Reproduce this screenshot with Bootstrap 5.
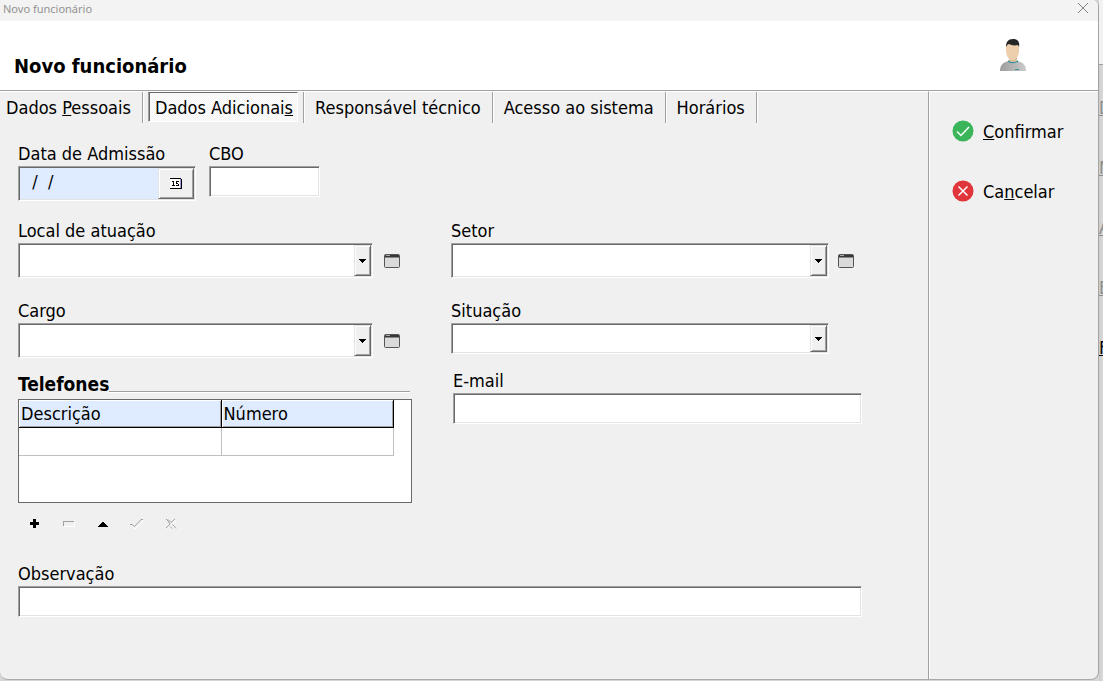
<!DOCTYPE html>
<html lang="pt-BR">
<head>
<meta charset="utf-8">
<meta name="viewport" content="width=device-width, initial-scale=1">
<title>Novo funcionário</title>
<link rel="stylesheet" href="https://cdn.jsdelivr.net/npm/bootstrap@5.3.0/dist/css/bootstrap.min.css">
<style>
  :root { --face: #f0f0f0; --edge: #a0a0a0; --dark: #696969; --lite: #e3e3e3; --tint: #dfebff; }
  body { font-family: "DejaVu Sans Condensed", "Noto Sans", sans-serif; font-size: 18px; line-height: 24px; color: #000; background: #d6d6d6; }
  button, input, select { font: inherit; color: inherit; }
  .dialog-window { background: var(--face); border-right: 1px solid #a4a4a4; border-bottom: 1px solid #a9a9a9; border-radius: 0 6px 8px 8px; overflow: hidden; margin-bottom: 1px; }
  .title-strip { height: 21px; background: #f3f3f3; color: #929292; font-family: "Noto Sans", sans-serif; font-size: 11px; line-height: 18px; padding-left: 3px; padding-right: 9px; }
  .page-head { height: 70px; border-bottom: 1px solid var(--edge); padding: 0 71px 12px 14px; }
  .page-head h1 { font-size: 20px; line-height: 24px; }
  .avatar { margin-bottom: 6px; }
  .plain { background: none; border: 0; padding: 0; color: inherit; }
  .close-btn { padding-top: 3px; }
  .main-pane { border-right: 1px solid var(--edge); }
  .main-pane, .side-pane { border-top: 1px solid #fff; }
  .side-pane { width: 169px; border-left: 1px solid #fff; padding: 28px 0 0 22px; gap: 36px; }
  .side-pane button { gap: 9px; }
  .side-pane svg { flex: none; margin-bottom: 2px; }
  .tab-strip { height: 31px; }
  .tab-strip button { border-right: 1px solid var(--edge); box-shadow: 1px 0 #fff; padding: 0 11px 0 11px; white-space: nowrap; }
  .tab-strip li:first-child button { padding-left: 6px; }
  .tab-strip .picked { border-right: 1px solid var(--edge); box-shadow: 1px 0 #fff; padding: 0 5px; }
  .tab-strip .picked button { padding: 1px 4px 0 6px; margin-bottom: 1px; border: 1px solid; border-color: var(--dark) #fff #fff var(--edge); box-shadow: inset 1px 0 var(--dark); background: repeating-conic-gradient(#fff 0 25%, #f2f2f2 0 50%) 0 0 / 2px 2px; }
  .form-area { padding: 18px 66px 40px 18px; }
  .form-area .row { --bs-gutter-x: 22px; }
  .form-area label { display: block; height: 25px; padding-top: 1px; }
  .first-line { gap: 13px; margin-bottom: 17px; }
  .line-a { margin-bottom: 20px; }
  .line-b { margin-bottom: 14px; }
  .sunk { border: 1px solid; border-color: var(--edge) #fff #fff var(--edge); box-shadow: inset 1px 1px var(--dark), inset -1px -1px var(--lite); background: #fff; border-radius: 0; height: 31px; padding: 2px 4px; width: 100%; }
  .tall { height: 35px; }
  .raised { background: var(--face); border: 1px solid; border-color: var(--lite) var(--dark) var(--dark) var(--lite); box-shadow: inset 1px 1px #fff, inset -1px -1px var(--edge); }
  .combo select { appearance: none; }
  .combo .drop { position: absolute; top: 2px; right: 2px; bottom: 2px; width: 17px; pointer-events: none; }
  .date-box { width: 178px; padding: 1px; }
  .date-box input { background: var(--tint); border: 0; min-width: 0; padding: 0 2px 4px 2px; outline: 0; }
  .date-box button { width: 36px; flex: none; }
  .cbo-box { width: 111px; }
  .left-combo { padding-right: 29px; gap: 11px; }
  .right-combo { padding-right: 8px; gap: 9px; }
  .status-combo { margin-right: 33px; }
  .legend-title { font-size: 19px; margin-bottom: 3px; }
  .legend-line { height: 1px; background: var(--edge); box-shadow: 0 1px #fff; margin: 0 2px 4px 0; }
  .phones { margin-right: 17px; }
  .grid-frame { border: 1px solid var(--dark); background: #fff; height: 104px; padding-right: 17px; }
  .grid-frame table { width: 100%; border-collapse: separate; border-spacing: 0; table-layout: fixed; }
  .grid-frame th { height: 28px; font-weight: 400; padding: 0 2px; background: var(--tint); border-right: 1px solid #000; border-bottom: 1px solid #000; box-shadow: inset 1px 1px #fff, inset -1px -1px var(--edge); }
  .grid-frame th:first-child { width: 54%; }
  .grid-frame td { height: 28px; border-right: 1px solid #c0c0c0; border-bottom: 1px solid #c0c0c0; }
  .record-bar { margin: 5px 0 23px; }
  .record-bar button { width: 34px; height: 30px; }
  .email-group { padding-left: 2px; }
  .behind { width: 4px; background: linear-gradient(90deg, #cdcdcd, #dadada); }
  .behind-head { height: 65px; background: #f2f2f2; border-bottom: 1px solid var(--edge); margin-bottom: 31px; }
  .behind span { display: block; height: 24px; margin-bottom: 36px; color: #8d8d8d; text-decoration: underline; }
</style>
</head>
<body>
<div class="d-flex min-vh-100">
  <main class="dialog-window d-flex flex-column flex-grow-1">
    <div class="title-strip d-flex justify-content-between align-items-start">
      <span>Novo funcionário</span>
      <button class="plain close-btn d-flex" type="button" aria-label="Fechar">
        <svg width="12" height="11" viewBox="0 0 12 11" fill="none" stroke="#858585"><path d="M1 0l10 10M11 0L1 10"/></svg>
      </button>
    </div>
    <header class="page-head bg-white d-flex justify-content-between align-items-end">
      <h1 class="fw-bold m-0">Novo funcionário</h1>
      <svg class="avatar" width="28" height="34" viewBox="0 0 28 34" aria-hidden="true">
        <defs><linearGradient id="shirt"><stop stop-color="#9d9d9d"/><stop offset="1" stop-color="#cbcbcb"/></linearGradient></defs>
        <path d="M1 33c0-6 3-9 9-10h8c6 1 9 4 9 10z" fill="url(#shirt)"/>
        <path d="M9 23q5 3 10 0" fill="none" stroke="#3a95a0" stroke-width="1.500"/>
        <path d="M10 18h8v5q-4 2-8 0z" fill="#dfbf9b"/>
        <path d="M7 9C7 3 20 3 20 9v4c0 5-3 9-6.500 9S7 18 7 13z" fill="#edcfad"/>
        <path d="M7 9C7 4 9 1 14 1c5 0 7 3 6 8l-1-2c-4 1-7 0-9-1-1 0-2 1-3 3z" fill="#262626"/>
        <path d="M16 31.500h4" stroke="#3a95a0"/>
      </svg>
    </header>
    <div class="d-flex flex-grow-1">
      <section class="main-pane flex-grow-1">
        <ul class="tab-strip d-flex list-unstyled m-0" role="tablist">
          <li class="d-flex"><button class="plain" role="tab" type="button">Dados <u>P</u>essoais</button></li>
          <li class="picked d-flex"><button role="tab" type="button" aria-selected="true">Dados Adicionai<u>s</u></button></li>
          <li class="d-flex"><button class="plain" role="tab" type="button">Responsável técnico</button></li>
          <li class="d-flex"><button class="plain" role="tab" type="button">Acesso ao sistema</button></li>
          <li class="d-flex"><button class="plain" role="tab" type="button">Horários</button></li>
        </ul>
        <form class="form-area" onsubmit="return false">
          <div class="first-line d-flex">
            <div>
              <label for="adm">Data de Admissão</label>
              <div class="sunk tall date-box d-flex">
                <input id="adm" class="flex-grow-1" type="text" value="  /  /">
                <button class="raised d-flex align-items-center justify-content-center p-0" type="button" aria-label="Calendário">
                  <svg width="14" height="14" viewBox="0 0 14 14" fill="none" shape-rendering="crispEdges"><path d="M1 1h11v11H1z" fill="#fff"/><path d="M1 1.500h11M1 11.500h12M12.500 2v10" stroke="#000"/><path d="M11.500 2v9" stroke="#9a9ae0"/><path d="M3 4.500h1M4.500 4v5M3 8.500h3M10 4.500H7.500v2H9M9.500 6.500v2M7 8.500h2" stroke="#000"/></svg>
                </button>
              </div>
            </div>
            <div>
              <label for="cbo">CBO</label>
              <input id="cbo" class="sunk cbo-box" type="text">
            </div>
          </div>
          <div class="row">
            <div class="col-6">
              <div class="line-a">
                <label for="local">Local de atuação</label>
                <div class="left-combo d-flex align-items-center">
                  <div class="combo position-relative flex-grow-1 d-flex">
                    <select id="local" class="sunk tall"><option></option></select>
                    <span class="drop raised d-flex align-items-center justify-content-center"><svg width="7" height="4" shape-rendering="crispEdges"><path d="M0 0h7v1H6v1H5v1H4v1H3V3H2V2H1V1H0z"/></svg></span>
                  </div>
                  <button class="plain d-flex" type="button" aria-label="Abrir locais"><svg width="16" height="14" viewBox="0 0 16 14"><rect x=".5" y=".5" width="15" height="13" rx="1" fill="#dadada" stroke="#555"/><path d="M1 1h14v2.500H1z" fill="#383838"/><path d="M2 1.500h4" stroke="#aaa"/></svg></button>
                </div>
              </div>
              <div class="line-b">
                <label for="cargo">Cargo</label>
                <div class="left-combo d-flex align-items-center">
                  <div class="combo position-relative flex-grow-1 d-flex">
                    <select id="cargo" class="sunk tall"><option></option></select>
                    <span class="drop raised d-flex align-items-center justify-content-center"><svg width="7" height="4" shape-rendering="crispEdges"><path d="M0 0h7v1H6v1H5v1H4v1H3V3H2V2H1V1H0z"/></svg></span>
                  </div>
                  <button class="plain d-flex" type="button" aria-label="Abrir cargos"><svg width="16" height="14" viewBox="0 0 16 14"><rect x=".5" y=".5" width="15" height="13" rx="1" fill="#dadada" stroke="#555"/><path d="M1 1h14v2.500H1z" fill="#383838"/><path d="M2 1.500h4" stroke="#aaa"/></svg></button>
                </div>
              </div>
              <div class="phones">
                <div class="legend-title d-flex align-items-end"><strong id="tel">Telefones</strong><span class="legend-line flex-grow-1"></span></div>
                <div class="grid-frame">
                  <table aria-labelledby="tel">
                    <thead><tr><th scope="col">Descrição</th><th scope="col">Número</th></tr></thead>
                    <tbody><tr><td></td><td></td></tr></tbody>
                  </table>
                </div>
              </div>
              <div class="record-bar d-flex">
                <button class="plain" type="button" aria-label="Inserir"><svg width="14" height="12" shape-rendering="crispEdges"><path d="M5 1h3v3h3v3H8v3H5V7H2V4h3z"/></svg></button>
                <button class="plain" type="button" disabled aria-label="Excluir"><svg width="14" height="12" fill="none" shape-rendering="crispEdges"><path d="M1.500 8V3.500H12" stroke="#a0a0a0"/><path d="M2 8.500h10.500V4" stroke="#fff"/></svg></button>
                <button class="plain" type="button" aria-label="Editar"><svg width="14" height="12" shape-rendering="crispEdges"><path d="M2 9h10V8h-1V7h-1V6H9V5H8V4H6v1H5v1H4v1H3v1H2z"/></svg></button>
                <button class="plain" type="button" disabled aria-label="Gravar"><svg width="14" height="12" fill="none"><path d="M1 7l4 4 8.500-8.500" stroke="#fff"/><path d="M0 6.500h2l2.500 2L11 1.500h2" stroke="#a0a0a0"/></svg></button>
                <button class="plain" type="button" disabled aria-label="Desfazer"><svg width="14" height="12" fill="none"><path d="M3 11.500l3-3M8.500 6L12 2M9 8.500l3 3" stroke="#fff"/><path d="M2 1.500h1l3 4.500-4 4M4 1.500l3 3 4-3.500M8.500 6.500l3.500 4M6 8.500l2 2" stroke="#a0a0a0"/></svg></button>
              </div>
            </div>
            <div class="col-6">
              <div class="line-a">
                <label for="setor">Setor</label>
                <div class="right-combo d-flex align-items-center">
                  <div class="combo position-relative flex-grow-1 d-flex">
                    <select id="setor" class="sunk tall"><option></option></select>
                    <span class="drop raised d-flex align-items-center justify-content-center"><svg width="7" height="4" shape-rendering="crispEdges"><path d="M0 0h7v1H6v1H5v1H4v1H3V3H2V2H1V1H0z"/></svg></span>
                  </div>
                  <button class="plain d-flex" type="button" aria-label="Abrir setores"><svg width="16" height="14" viewBox="0 0 16 14"><rect x=".5" y=".5" width="15" height="13" rx="1" fill="#dadada" stroke="#555"/><path d="M1 1h14v2.500H1z" fill="#383838"/><path d="M2 1.500h4" stroke="#aaa"/></svg></button>
                </div>
              </div>
              <div class="line-b">
                <label for="situacao">Situação</label>
                <div class="status-combo combo position-relative d-flex">
                  <select id="situacao" class="sunk"><option></option></select>
                  <span class="drop raised d-flex align-items-center justify-content-center"><svg width="7" height="4" shape-rendering="crispEdges"><path d="M0 0h7v1H6v1H5v1H4v1H3V3H2V2H1V1H0z"/></svg></span>
                </div>
              </div>
              <div class="email-group">
                <label for="email">E-mail</label>
                <input id="email" class="sunk" type="email">
              </div>
            </div>
          </div>
          <label for="obs">Observação</label>
          <input id="obs" class="sunk" type="text">
        </form>
      </section>
      <aside class="side-pane d-flex flex-column flex-shrink-0">
        <button class="plain d-flex align-items-center" type="button"><svg width="22" height="22" viewBox="0 0 22 22" fill="none"><circle cx="11" cy="11" r="10.500" fill="#3bb55a"/><path d="M5 11.500l4 4 8-8.500" stroke="#fff" stroke-width="1.500"/></svg><span><u>C</u>onfirmar</span></button>
        <button class="plain d-flex align-items-center" type="button"><svg width="22" height="22" viewBox="0 0 22 22" fill="none"><circle cx="11" cy="11" r="10.500" fill="#e0353b"/><path d="M6.500 6.500l9 9M15.500 6.500l-9 9" stroke="#fff" stroke-width="1.500"/></svg><span>Ca<u>n</u>celar</span></button>
      </aside>
    </div>
  </main>
  <div class="behind overflow-hidden flex-shrink-0" aria-hidden="true">
    <div class="behind-head"></div>
    <span>D</span><span>N</span><span>A</span><span>E</span><span class="text-black">F</span>
  </div>
</div>
<script src="https://cdn.jsdelivr.net/npm/bootstrap@5.3.0/dist/js/bootstrap.bundle.min.js"></script>
</body>
</html>
